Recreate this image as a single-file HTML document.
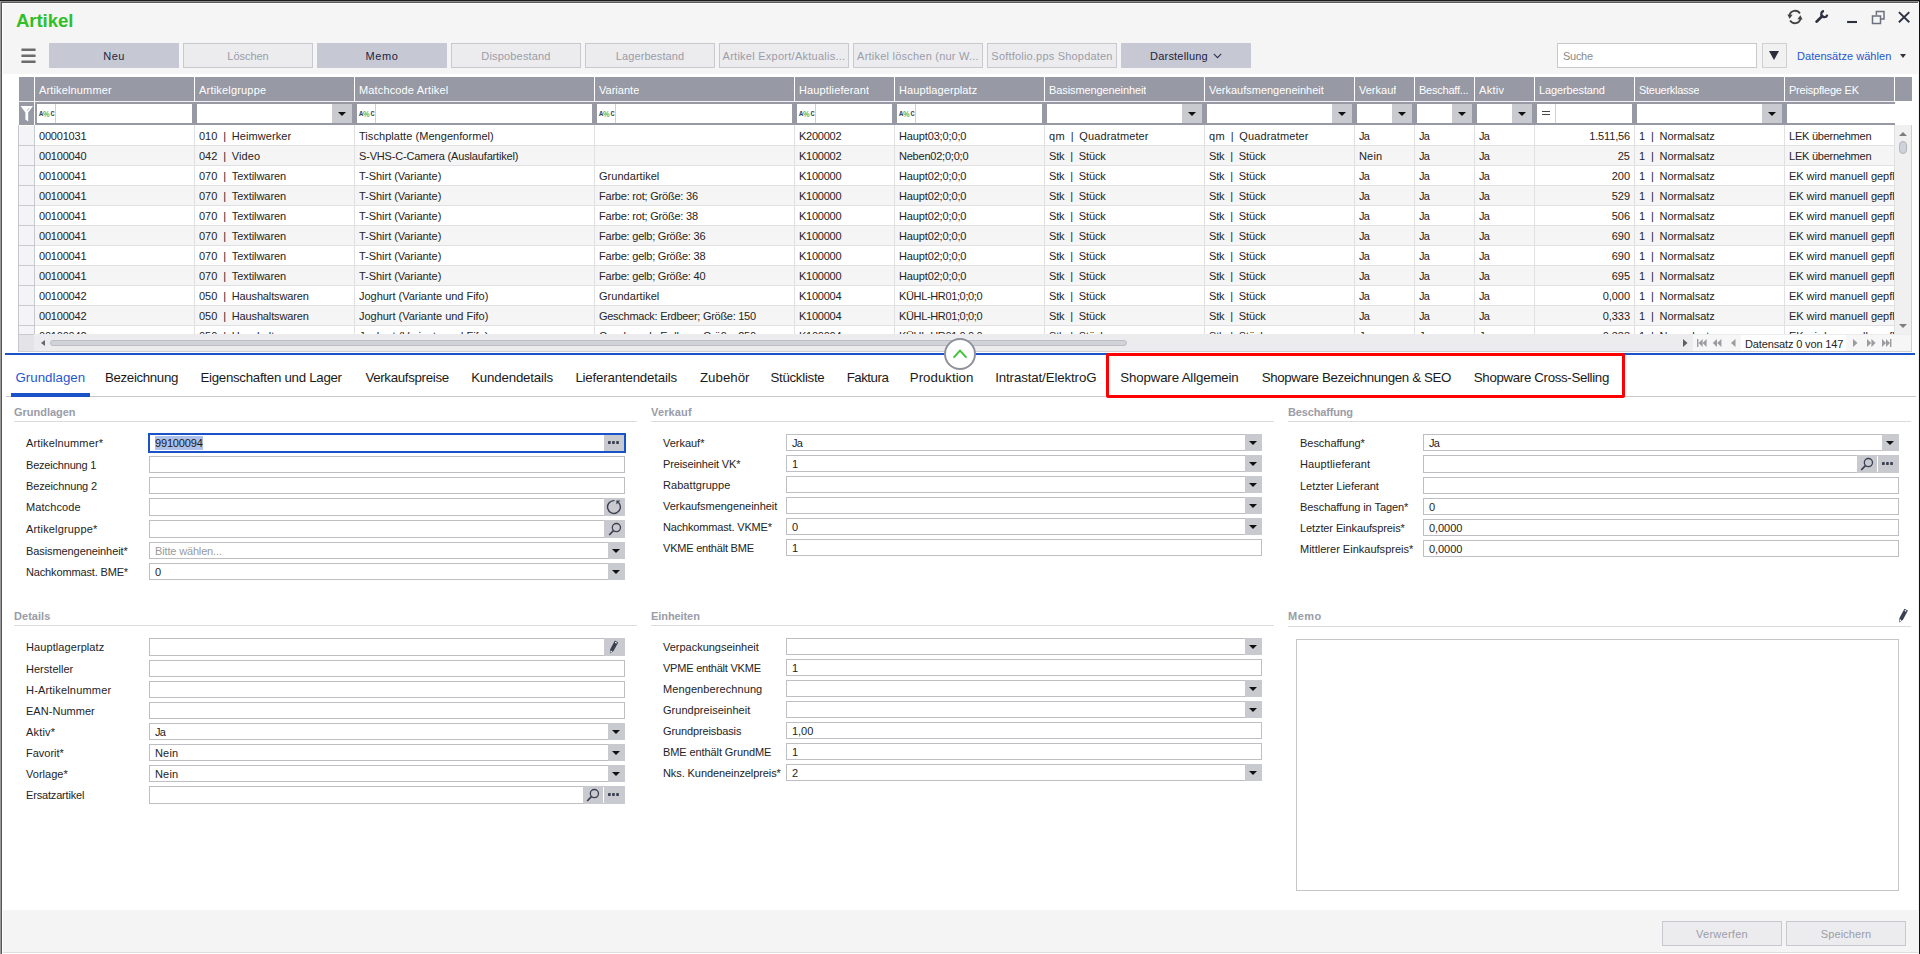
<!DOCTYPE html>
<html lang="de"><head><meta charset="utf-8"><title>Artikel</title>
<style>
*{box-sizing:border-box;margin:0;padding:0}
html,body{width:1920px;height:954px;overflow:hidden;background:#fff}
body{position:relative;font-family:"Liberation Sans",sans-serif;font-size:11px;color:#242424;line-height:1}
.a{position:absolute}
.t{position:absolute;white-space:nowrap;line-height:14px;height:14px}
#topbg{left:3px;top:4px;width:1915px;height:70px;background:#f5f5f5}
#title{left:16px;top:10px;font-size:18.6px;font-weight:bold;color:#2fc028;line-height:22px;height:22px}
.btn{position:absolute;top:43px;height:25px;width:130px;text-align:center;line-height:25px;padding-top:1px;white-space:nowrap;overflow:hidden}
.btn.on{background:#c6c9d4;color:#1c2340}
.btn.off{background:#ececef;border:1px solid #c8c9cf;color:#9a9ca8;line-height:23px}
#ghead{left:19px;top:77px;width:1893px;height:24px;background:#9799a4}
#gfilt{left:19px;top:102px;width:1876px;height:23px;background:#9799a4}
.hsep{position:absolute;top:77px;width:1px;height:24px;background:#fff}
.ht{position:absolute;top:83px;color:#fff;white-space:nowrap;line-height:14px;height:14px;overflow:hidden}
.fi{position:absolute;top:104px;height:19px;background:#fff}
.fdd{position:absolute;top:104px;height:19px;width:20px;background:#c9cacf}
.tri{position:absolute;width:0;height:0;border-left:4px solid transparent;border-right:4px solid transparent;border-top:4px solid #111}
.abc{position:absolute;top:109px;width:17px;height:11px;font-family:"Liberation Mono",monospace;font-weight:bold;color:#444;line-height:11px}
.abc b{position:absolute;top:0;font-size:7px;font-weight:bold}
.abc i{position:absolute;top:0;left:4.4px;font-size:9px;font-style:normal;font-weight:bold;color:#4fb95c;font-family:"Liberation Sans",sans-serif;transform:scaleX(.82);transform-origin:0 0}
.row{position:absolute;left:19px;width:1876px;height:20px;border-bottom:1px solid #e1e1e3}
.row.alt{background:#f5f5f5}
.ind{position:absolute;left:0;top:0;width:15px;height:20px;background:#f4f4f6;border-bottom:1px solid #c9cad0}
.c{position:absolute;top:3px;white-space:nowrap;line-height:14px;height:14px;overflow:hidden}
.c.r{text-align:right}
.c .p{display:inline-block;text-align:center;white-space:normal}
.vsep{position:absolute;top:125px;width:1px;height:209px;background:#e1e1e3}
.lab{position:absolute;white-space:nowrap;line-height:14px;height:14px}
.fld{position:absolute;background:#fff;border:1px solid #bfbfc3;height:17px}
.fld .v{position:absolute;left:5px;top:1px;line-height:14px;white-space:nowrap}
.fld .ph{color:#9a9a9a}
.bx{position:absolute;top:-1px;right:-1px;bottom:-1px;background:#c9cacf}
.sec{position:absolute;font-weight:bold;color:#9a9ca8;white-space:nowrap;line-height:14px;height:14px}
.secl{position:absolute;height:1px;background:#dcdcde}
.tab{position:absolute;top:369px;font-size:13.3px;line-height:18px;height:18px;white-space:nowrap;color:#1a1a1a}
</style></head>
<body>
<div class="a" style="left:0;top:0;width:1920px;height:1px;background:#1c1c1c"></div><div class="a" style="left:0;top:1px;width:1920px;height:1px;background:#8c8c8c"></div><div class="a" style="left:1px;top:2px;width:1917px;height:1px;background:#5a5a5a"></div><div class="a" style="left:2px;top:3px;width:1916px;height:1px;background:#fff"></div><div class="a" style="left:2px;top:3px;width:1px;height:950px;background:#fff"></div><div class="a" style="left:0;top:1px;width:1px;height:953px;background:#9a9a9a"></div><div class="a" style="left:1px;top:2px;width:1px;height:952px;background:#555"></div><div class="a" style="left:1918px;top:2px;width:1px;height:952px;background:#f4f4f4"></div><div class="a" style="left:1919px;top:0;width:1px;height:954px;background:#111"></div><div class="a" id="topbg"></div>
<div class="a" style="left:3px;top:910px;width:1915px;height:42px;background:#f4f4f4"></div><div class="a" style="left:3px;top:952px;width:1915px;height:1px;background:#dedede"></div>
<div class="a" id="title" style="letter-spacing:-0.084px;">Artikel</div>
<svg class="a" style="left:1780px;top:4px" width="138" height="28" viewBox="0 0 138 28" fill="none">
<g stroke="#444" stroke-width="1.9"><path d="M19.9 9.4A5.7 5.7 0 0 0 9.5 11.4"/><path d="M10.1 16.6A5.7 5.7 0 0 0 20.5 14.6"/></g>
<path d="M7.4 10.4l5.2 0.3-3.0 4.1z" fill="#444"/><path d="M22.6 15.6l-5.2-0.3 3.0-4.1z" fill="#444"/>
<path d="M36.5 17.7l5.8-5.7" stroke="#2d3142" stroke-width="2.6" stroke-linecap="round"/>
<path d="M47.2 10.6A3.0 3.0 0 1 1 44.0 7.2" stroke="#2d3142" stroke-width="2.2"/>
<path d="M67.1 18h9.9" stroke="#2d3142" stroke-width="2.1"/>
<path d="M92.5 11.9h8v7.6h-8z" stroke="#6e717e" stroke-width="1.5"/>
<path d="M96.4 11.2v-3.7h7.6v7.6h-3.2" stroke="#6e717e" stroke-width="1.5"/>
<path d="M118.9 8.1l10.4 10.2M129.3 8.1l-10.4 10.2" stroke="#2d3142" stroke-width="1.9"/>
</svg>
<svg class="a" style="left:20px;top:47px" width="18" height="18" viewBox="0 0 18 18" fill="#6c6c6c"><rect x="1.4" y="1.5" width="14.2" height="2.4" rx="0.5"/><rect x="1.4" y="7.5" width="14.2" height="2.4" rx="0.5"/><rect x="1.4" y="13.5" width="14.2" height="2.4" rx="0.5"/></svg>
<div class="btn on" style="left:49px;letter-spacing:0.374px;">Neu</div><div class="btn off" style="left:183px;letter-spacing:-0.041px;">Löschen</div><div class="btn on" style="left:317px;letter-spacing:0.560px;">Memo</div><div class="btn off" style="left:451px;letter-spacing:0.169px;">Dispobestand</div><div class="btn off" style="left:585px;letter-spacing:0.085px;">Lagerbestand</div><div class="btn off" style="left:719px;letter-spacing:0.256px;">Artikel Export/Aktualis...</div><div class="btn off" style="left:853px;letter-spacing:0.226px;">Artikel löschen (nur W...</div><div class="btn off" style="left:987px;letter-spacing:0.195px;">Softfolio.pps Shopdaten</div><div class="btn on" style="left:1121px"><span style="letter-spacing:0.196px;">Darstellung</span><svg width="9" height="6" viewBox="0 0 9 6" style="margin-left:5px;vertical-align:1px" fill="none" stroke="#2d3350" stroke-width="1.1"><path d="M0.8 0.9l3.7 3.7 3.7-3.7"/></svg></div>
<div class="a" style="left:1557px;top:43px;width:200px;height:25px;background:#fff;border:1px solid #c9c9cc"><span class="t" style="left:5px;top:5px;color:#8a8a8a;letter-spacing:-0.278px;">Suche</span></div><div class="a" style="left:1762px;top:43px;width:25px;height:25px;background:#f1f1f2;border:1px solid #d0d0d3"><div class="a" style="left:6px;top:7px;width:0;height:0;border-left:5px solid transparent;border-right:5px solid transparent;border-top:9px solid #2a2d3a"></div></div><div class="t" style="left:1797px;top:49px;color:#1f55cf;letter-spacing:0.044px;">Datensätze wählen</div><div class="a" style="left:1900px;top:54px;width:0;height:0;border-left:3.5px solid transparent;border-right:3.5px solid transparent;border-top:4px solid #333"></div>
<div class="a" id="ghead"></div><div class="a" style="left:19px;top:101px;width:1876px;height:1px;background:#f2f2f4"></div><div class="a" id="gfilt"></div><div class="a" style="left:1895px;top:101px;width:17px;height:24px;background:#fff"></div><div class="a" style="left:1895px;top:125px;width:17px;height:209px;background:#f0f0f1"></div><div class="hsep" style="left:34px;height:48px"></div><div class="hsep" style="left:194px"></div><div class="ht" style="left:39px;max-width:153px;letter-spacing:0.146px;">Artikelnummer</div><div class="fi" style="left:37px;width:155px"></div><div class="a" style="left:55px;top:104px;width:1px;height:19px;background:#cfcfd4"></div><div class="abc" style="left:39px"><b style="left:0">A</b><i>%</i><b style="left:11.6px">C</b></div><div class="hsep" style="left:354px"></div><div class="ht" style="left:199px;max-width:153px;letter-spacing:0.191px;">Artikelgruppe</div><div class="fi" style="left:197px;width:155px"></div><div class="fdd" style="left:332px"><div class="tri" style="left:6px;top:8px"></div></div><div class="hsep" style="left:594px"></div><div class="ht" style="left:359px;max-width:233px;letter-spacing:0.146px;">Matchcode Artikel</div><div class="fi" style="left:357px;width:235px"></div><div class="a" style="left:375px;top:104px;width:1px;height:19px;background:#cfcfd4"></div><div class="abc" style="left:359px"><b style="left:0">A</b><i>%</i><b style="left:11.6px">C</b></div><div class="hsep" style="left:794px"></div><div class="ht" style="left:599px;max-width:193px;letter-spacing:0.018px;">Variante</div><div class="fi" style="left:597px;width:195px"></div><div class="a" style="left:615px;top:104px;width:1px;height:19px;background:#cfcfd4"></div><div class="abc" style="left:599px"><b style="left:0">A</b><i>%</i><b style="left:11.6px">C</b></div><div class="hsep" style="left:894px"></div><div class="ht" style="left:799px;max-width:93px;letter-spacing:0.129px;">Hauptlieferant</div><div class="fi" style="left:797px;width:95px"></div><div class="a" style="left:815px;top:104px;width:1px;height:19px;background:#cfcfd4"></div><div class="abc" style="left:799px"><b style="left:0">A</b><i>%</i><b style="left:11.6px">C</b></div><div class="hsep" style="left:1044px"></div><div class="ht" style="left:899px;max-width:143px;letter-spacing:0.083px;">Hauptlagerplatz</div><div class="fi" style="left:897px;width:145px"></div><div class="a" style="left:915px;top:104px;width:1px;height:19px;background:#cfcfd4"></div><div class="abc" style="left:899px"><b style="left:0">A</b><i>%</i><b style="left:11.6px">C</b></div><div class="hsep" style="left:1204px"></div><div class="ht" style="left:1049px;max-width:153px;letter-spacing:-0.098px;">Basismengeneinheit</div><div class="fi" style="left:1047px;width:155px"></div><div class="fdd" style="left:1182px"><div class="tri" style="left:6px;top:8px"></div></div><div class="hsep" style="left:1354px"></div><div class="ht" style="left:1209px;max-width:143px;letter-spacing:-0.008px;">Verkaufsmengeneinheit</div><div class="fi" style="left:1207px;width:145px"></div><div class="fdd" style="left:1332px"><div class="tri" style="left:6px;top:8px"></div></div><div class="hsep" style="left:1414px"></div><div class="ht" style="left:1359px;max-width:53px;letter-spacing:-0.000px;">Verkauf</div><div class="fi" style="left:1357px;width:55px"></div><div class="fdd" style="left:1392px"><div class="tri" style="left:6px;top:8px"></div></div><div class="hsep" style="left:1474px"></div><div class="ht" style="left:1419px;max-width:53px;letter-spacing:-0.225px;">Beschaff...</div><div class="fi" style="left:1417px;width:55px"></div><div class="fdd" style="left:1452px"><div class="tri" style="left:6px;top:8px"></div></div><div class="hsep" style="left:1534px"></div><div class="ht" style="left:1479px;max-width:53px;letter-spacing:0.293px;">Aktiv</div><div class="fi" style="left:1477px;width:55px"></div><div class="fdd" style="left:1512px"><div class="tri" style="left:6px;top:8px"></div></div><div class="hsep" style="left:1634px"></div><div class="ht" style="left:1539px;max-width:93px;letter-spacing:-0.123px;">Lagerbestand</div><div class="fi" style="left:1537px;width:95px"></div><div class="a" style="left:1555px;top:104px;width:1px;height:19px;background:#cfcfd4"></div><div class="a" style="left:1542px;top:111px;width:8px;height:1px;background:#444"></div><div class="a" style="left:1542px;top:114px;width:8px;height:1px;background:#444"></div><div class="hsep" style="left:1784px"></div><div class="ht" style="left:1639px;max-width:143px;letter-spacing:-0.274px;">Steuerklasse</div><div class="fi" style="left:1637px;width:145px"></div><div class="fdd" style="left:1762px"><div class="tri" style="left:6px;top:8px"></div></div><div class="hsep" style="left:1894px"></div><div class="ht" style="left:1789px;max-width:103px;letter-spacing:-0.212px;">Preispflege EK</div><div class="fi" style="left:1787px;width:108px"></div>
<svg class="a" style="left:20px;top:105px" width="14" height="18" viewBox="0 0 14 18"><path d="M0.5 1h12.5l-4.8 6.5v9l-2.8-2v-7z" fill="#fff"/><path d="M9.2 3.2l-2.2 2.6" stroke="#9799a4" stroke-width="0.8"/></svg>
<div class="a" style="left:0;top:126px;width:1920px;height:208px;overflow:hidden"><div class="row" style="top:0px"><div class="ind"></div><div class="c" style="left:20px;width:151px"><span style="letter-spacing:-0.205px;">00001031</span></div><div class="c" style="left:180px;width:151px"><span style="letter-spacing:-0.018px;">010</span><span class="p" style="width:14.5px"> | </span><span style="letter-spacing:0.063px;">Heimwerker</span></div><div class="c" style="left:340px;width:231px"><span style="letter-spacing:0.051px;">Tischplatte (Mengenformel)</span></div><div class="c" style="left:780px;width:91px"><span style="letter-spacing:-0.249px;">K200002</span></div><div class="c" style="left:880px;width:141px"><span style="letter-spacing:-0.139px;">Haupt03;0;0;0</span></div><div class="c" style="left:1030px;width:151px"><span style="letter-spacing:0.260px;">qm</span><span class="p" style="width:14.5px"> | </span><span style="letter-spacing:0.120px;">Quadratmeter</span></div><div class="c" style="left:1190px;width:141px"><span style="letter-spacing:0.260px;">qm</span><span class="p" style="width:14.5px"> | </span><span style="letter-spacing:0.120px;">Quadratmeter</span></div><div class="c" style="left:1340px;width:51px"><span style="letter-spacing:-0.659px;">Ja</span></div><div class="c" style="left:1400px;width:51px"><span style="letter-spacing:-0.659px;">Ja</span></div><div class="c" style="left:1460px;width:51px"><span style="letter-spacing:-0.659px;">Ja</span></div><div class="c r" style="left:1520px;width:91px"><span style="letter-spacing:-0.150px;">1.511,56</span></div><div class="c" style="left:1620px;width:141px">1<span class="p" style="width:14.4px"> | </span><span style="letter-spacing:-0.032px;">Normalsatz</span></div><div class="c" style="left:1770px;width:105px"><span style="letter-spacing:-0.237px;">LEK übernehmen</span></div></div><div class="row alt" style="top:20px"><div class="ind"></div><div class="c" style="left:20px;width:151px"><span style="letter-spacing:-0.205px;">00100040</span></div><div class="c" style="left:180px;width:151px"><span style="letter-spacing:-0.018px;">042</span><span class="p" style="width:14.5px"> | </span><span style="letter-spacing:0.073px;">Video</span></div><div class="c" style="left:340px;width:231px"><span style="letter-spacing:-0.165px;">S-VHS-C-Camera (Auslaufartikel)</span></div><div class="c" style="left:780px;width:91px"><span style="letter-spacing:-0.249px;">K100002</span></div><div class="c" style="left:880px;width:141px"><span style="letter-spacing:-0.221px;">Neben02;0;0;0</span></div><div class="c" style="left:1030px;width:151px"><span style="letter-spacing:-0.198px;">Stk</span><span class="p" style="width:14.5px"> | </span><span style="letter-spacing:-0.142px;">Stück</span></div><div class="c" style="left:1190px;width:141px"><span style="letter-spacing:-0.198px;">Stk</span><span class="p" style="width:14.5px"> | </span><span style="letter-spacing:-0.142px;">Stück</span></div><div class="c" style="left:1340px;width:51px"><span style="letter-spacing:0.169px;">Nein</span></div><div class="c" style="left:1400px;width:51px"><span style="letter-spacing:-0.659px;">Ja</span></div><div class="c" style="left:1460px;width:51px"><span style="letter-spacing:-0.659px;">Ja</span></div><div class="c r" style="left:1520px;width:91px"><span style="letter-spacing:0.032px;">25</span></div><div class="c" style="left:1620px;width:141px">1<span class="p" style="width:14.4px"> | </span><span style="letter-spacing:-0.032px;">Normalsatz</span></div><div class="c" style="left:1770px;width:105px"><span style="letter-spacing:-0.237px;">LEK übernehmen</span></div></div><div class="row" style="top:40px"><div class="ind"></div><div class="c" style="left:20px;width:151px"><span style="letter-spacing:-0.205px;">00100041</span></div><div class="c" style="left:180px;width:151px"><span style="letter-spacing:-0.018px;">070</span><span class="p" style="width:14.5px"> | </span><span style="letter-spacing:-0.066px;">Textilwaren</span></div><div class="c" style="left:340px;width:231px"><span style="letter-spacing:-0.035px;">T-Shirt (Variante)</span></div><div class="c" style="left:580px;width:191px"><span style="letter-spacing:0.032px;">Grundartikel</span></div><div class="c" style="left:780px;width:91px"><span style="letter-spacing:-0.249px;">K100000</span></div><div class="c" style="left:880px;width:141px"><span style="letter-spacing:-0.139px;">Haupt02;0;0;0</span></div><div class="c" style="left:1030px;width:151px"><span style="letter-spacing:-0.198px;">Stk</span><span class="p" style="width:14.5px"> | </span><span style="letter-spacing:-0.142px;">Stück</span></div><div class="c" style="left:1190px;width:141px"><span style="letter-spacing:-0.198px;">Stk</span><span class="p" style="width:14.5px"> | </span><span style="letter-spacing:-0.142px;">Stück</span></div><div class="c" style="left:1340px;width:51px"><span style="letter-spacing:-0.659px;">Ja</span></div><div class="c" style="left:1400px;width:51px"><span style="letter-spacing:-0.659px;">Ja</span></div><div class="c" style="left:1460px;width:51px"><span style="letter-spacing:-0.659px;">Ja</span></div><div class="c r" style="left:1520px;width:91px"><span style="letter-spacing:-0.018px;">200</span></div><div class="c" style="left:1620px;width:141px">1<span class="p" style="width:14.4px"> | </span><span style="letter-spacing:-0.032px;">Normalsatz</span></div><div class="c" style="left:1770px;width:105px"><span style="letter-spacing:-0.037px;">EK wird manuell gepflegt</span></div></div><div class="row alt" style="top:60px"><div class="ind"></div><div class="c" style="left:20px;width:151px"><span style="letter-spacing:-0.205px;">00100041</span></div><div class="c" style="left:180px;width:151px"><span style="letter-spacing:-0.018px;">070</span><span class="p" style="width:14.5px"> | </span><span style="letter-spacing:-0.066px;">Textilwaren</span></div><div class="c" style="left:340px;width:231px"><span style="letter-spacing:-0.035px;">T-Shirt (Variante)</span></div><div class="c" style="left:580px;width:191px"><span style="letter-spacing:-0.215px;">Farbe: rot; Größe: 36</span></div><div class="c" style="left:780px;width:91px"><span style="letter-spacing:-0.249px;">K100000</span></div><div class="c" style="left:880px;width:141px"><span style="letter-spacing:-0.139px;">Haupt02;0;0;0</span></div><div class="c" style="left:1030px;width:151px"><span style="letter-spacing:-0.198px;">Stk</span><span class="p" style="width:14.5px"> | </span><span style="letter-spacing:-0.142px;">Stück</span></div><div class="c" style="left:1190px;width:141px"><span style="letter-spacing:-0.198px;">Stk</span><span class="p" style="width:14.5px"> | </span><span style="letter-spacing:-0.142px;">Stück</span></div><div class="c" style="left:1340px;width:51px"><span style="letter-spacing:-0.659px;">Ja</span></div><div class="c" style="left:1400px;width:51px"><span style="letter-spacing:-0.659px;">Ja</span></div><div class="c" style="left:1460px;width:51px"><span style="letter-spacing:-0.659px;">Ja</span></div><div class="c r" style="left:1520px;width:91px"><span style="letter-spacing:-0.018px;">529</span></div><div class="c" style="left:1620px;width:141px">1<span class="p" style="width:14.4px"> | </span><span style="letter-spacing:-0.032px;">Normalsatz</span></div><div class="c" style="left:1770px;width:105px"><span style="letter-spacing:-0.037px;">EK wird manuell gepflegt</span></div></div><div class="row" style="top:80px"><div class="ind"></div><div class="c" style="left:20px;width:151px"><span style="letter-spacing:-0.205px;">00100041</span></div><div class="c" style="left:180px;width:151px"><span style="letter-spacing:-0.018px;">070</span><span class="p" style="width:14.5px"> | </span><span style="letter-spacing:-0.066px;">Textilwaren</span></div><div class="c" style="left:340px;width:231px"><span style="letter-spacing:-0.035px;">T-Shirt (Variante)</span></div><div class="c" style="left:580px;width:191px"><span style="letter-spacing:-0.215px;">Farbe: rot; Größe: 38</span></div><div class="c" style="left:780px;width:91px"><span style="letter-spacing:-0.249px;">K100000</span></div><div class="c" style="left:880px;width:141px"><span style="letter-spacing:-0.139px;">Haupt02;0;0;0</span></div><div class="c" style="left:1030px;width:151px"><span style="letter-spacing:-0.198px;">Stk</span><span class="p" style="width:14.5px"> | </span><span style="letter-spacing:-0.142px;">Stück</span></div><div class="c" style="left:1190px;width:141px"><span style="letter-spacing:-0.198px;">Stk</span><span class="p" style="width:14.5px"> | </span><span style="letter-spacing:-0.142px;">Stück</span></div><div class="c" style="left:1340px;width:51px"><span style="letter-spacing:-0.659px;">Ja</span></div><div class="c" style="left:1400px;width:51px"><span style="letter-spacing:-0.659px;">Ja</span></div><div class="c" style="left:1460px;width:51px"><span style="letter-spacing:-0.659px;">Ja</span></div><div class="c r" style="left:1520px;width:91px"><span style="letter-spacing:-0.018px;">506</span></div><div class="c" style="left:1620px;width:141px">1<span class="p" style="width:14.4px"> | </span><span style="letter-spacing:-0.032px;">Normalsatz</span></div><div class="c" style="left:1770px;width:105px"><span style="letter-spacing:-0.037px;">EK wird manuell gepflegt</span></div></div><div class="row alt" style="top:100px"><div class="ind"></div><div class="c" style="left:20px;width:151px"><span style="letter-spacing:-0.205px;">00100041</span></div><div class="c" style="left:180px;width:151px"><span style="letter-spacing:-0.018px;">070</span><span class="p" style="width:14.5px"> | </span><span style="letter-spacing:-0.066px;">Textilwaren</span></div><div class="c" style="left:340px;width:231px"><span style="letter-spacing:-0.035px;">T-Shirt (Variante)</span></div><div class="c" style="left:580px;width:191px"><span style="letter-spacing:-0.226px;">Farbe: gelb; Größe: 36</span></div><div class="c" style="left:780px;width:91px"><span style="letter-spacing:-0.249px;">K100000</span></div><div class="c" style="left:880px;width:141px"><span style="letter-spacing:-0.139px;">Haupt02;0;0;0</span></div><div class="c" style="left:1030px;width:151px"><span style="letter-spacing:-0.198px;">Stk</span><span class="p" style="width:14.5px"> | </span><span style="letter-spacing:-0.142px;">Stück</span></div><div class="c" style="left:1190px;width:141px"><span style="letter-spacing:-0.198px;">Stk</span><span class="p" style="width:14.5px"> | </span><span style="letter-spacing:-0.142px;">Stück</span></div><div class="c" style="left:1340px;width:51px"><span style="letter-spacing:-0.659px;">Ja</span></div><div class="c" style="left:1400px;width:51px"><span style="letter-spacing:-0.659px;">Ja</span></div><div class="c" style="left:1460px;width:51px"><span style="letter-spacing:-0.659px;">Ja</span></div><div class="c r" style="left:1520px;width:91px"><span style="letter-spacing:-0.018px;">690</span></div><div class="c" style="left:1620px;width:141px">1<span class="p" style="width:14.4px"> | </span><span style="letter-spacing:-0.032px;">Normalsatz</span></div><div class="c" style="left:1770px;width:105px"><span style="letter-spacing:-0.037px;">EK wird manuell gepflegt</span></div></div><div class="row" style="top:120px"><div class="ind"></div><div class="c" style="left:20px;width:151px"><span style="letter-spacing:-0.205px;">00100041</span></div><div class="c" style="left:180px;width:151px"><span style="letter-spacing:-0.018px;">070</span><span class="p" style="width:14.5px"> | </span><span style="letter-spacing:-0.066px;">Textilwaren</span></div><div class="c" style="left:340px;width:231px"><span style="letter-spacing:-0.035px;">T-Shirt (Variante)</span></div><div class="c" style="left:580px;width:191px"><span style="letter-spacing:-0.226px;">Farbe: gelb; Größe: 38</span></div><div class="c" style="left:780px;width:91px"><span style="letter-spacing:-0.249px;">K100000</span></div><div class="c" style="left:880px;width:141px"><span style="letter-spacing:-0.139px;">Haupt02;0;0;0</span></div><div class="c" style="left:1030px;width:151px"><span style="letter-spacing:-0.198px;">Stk</span><span class="p" style="width:14.5px"> | </span><span style="letter-spacing:-0.142px;">Stück</span></div><div class="c" style="left:1190px;width:141px"><span style="letter-spacing:-0.198px;">Stk</span><span class="p" style="width:14.5px"> | </span><span style="letter-spacing:-0.142px;">Stück</span></div><div class="c" style="left:1340px;width:51px"><span style="letter-spacing:-0.659px;">Ja</span></div><div class="c" style="left:1400px;width:51px"><span style="letter-spacing:-0.659px;">Ja</span></div><div class="c" style="left:1460px;width:51px"><span style="letter-spacing:-0.659px;">Ja</span></div><div class="c r" style="left:1520px;width:91px"><span style="letter-spacing:-0.018px;">690</span></div><div class="c" style="left:1620px;width:141px">1<span class="p" style="width:14.4px"> | </span><span style="letter-spacing:-0.032px;">Normalsatz</span></div><div class="c" style="left:1770px;width:105px"><span style="letter-spacing:-0.037px;">EK wird manuell gepflegt</span></div></div><div class="row alt" style="top:140px"><div class="ind"></div><div class="c" style="left:20px;width:151px"><span style="letter-spacing:-0.205px;">00100041</span></div><div class="c" style="left:180px;width:151px"><span style="letter-spacing:-0.018px;">070</span><span class="p" style="width:14.5px"> | </span><span style="letter-spacing:-0.066px;">Textilwaren</span></div><div class="c" style="left:340px;width:231px"><span style="letter-spacing:-0.035px;">T-Shirt (Variante)</span></div><div class="c" style="left:580px;width:191px"><span style="letter-spacing:-0.226px;">Farbe: gelb; Größe: 40</span></div><div class="c" style="left:780px;width:91px"><span style="letter-spacing:-0.249px;">K100000</span></div><div class="c" style="left:880px;width:141px"><span style="letter-spacing:-0.139px;">Haupt02;0;0;0</span></div><div class="c" style="left:1030px;width:151px"><span style="letter-spacing:-0.198px;">Stk</span><span class="p" style="width:14.5px"> | </span><span style="letter-spacing:-0.142px;">Stück</span></div><div class="c" style="left:1190px;width:141px"><span style="letter-spacing:-0.198px;">Stk</span><span class="p" style="width:14.5px"> | </span><span style="letter-spacing:-0.142px;">Stück</span></div><div class="c" style="left:1340px;width:51px"><span style="letter-spacing:-0.659px;">Ja</span></div><div class="c" style="left:1400px;width:51px"><span style="letter-spacing:-0.659px;">Ja</span></div><div class="c" style="left:1460px;width:51px"><span style="letter-spacing:-0.659px;">Ja</span></div><div class="c r" style="left:1520px;width:91px"><span style="letter-spacing:-0.018px;">695</span></div><div class="c" style="left:1620px;width:141px">1<span class="p" style="width:14.4px"> | </span><span style="letter-spacing:-0.032px;">Normalsatz</span></div><div class="c" style="left:1770px;width:105px"><span style="letter-spacing:-0.037px;">EK wird manuell gepflegt</span></div></div><div class="row" style="top:160px"><div class="ind"></div><div class="c" style="left:20px;width:151px"><span style="letter-spacing:-0.205px;">00100042</span></div><div class="c" style="left:180px;width:151px"><span style="letter-spacing:-0.018px;">050</span><span class="p" style="width:14.5px"> | </span><span style="letter-spacing:-0.148px;">Haushaltswaren</span></div><div class="c" style="left:340px;width:231px"><span style="letter-spacing:-0.027px;">Joghurt (Variante und Fifo)</span></div><div class="c" style="left:580px;width:191px"><span style="letter-spacing:0.032px;">Grundartikel</span></div><div class="c" style="left:780px;width:91px"><span style="letter-spacing:-0.249px;">K100004</span></div><div class="c" style="left:880px;width:141px"><span style="letter-spacing:-0.357px;">KÜHL-HR01;0;0;0</span></div><div class="c" style="left:1030px;width:151px"><span style="letter-spacing:-0.198px;">Stk</span><span class="p" style="width:14.5px"> | </span><span style="letter-spacing:-0.142px;">Stück</span></div><div class="c" style="left:1190px;width:141px"><span style="letter-spacing:-0.198px;">Stk</span><span class="p" style="width:14.5px"> | </span><span style="letter-spacing:-0.142px;">Stück</span></div><div class="c" style="left:1340px;width:51px"><span style="letter-spacing:-0.659px;">Ja</span></div><div class="c" style="left:1400px;width:51px"><span style="letter-spacing:-0.659px;">Ja</span></div><div class="c" style="left:1460px;width:51px"><span style="letter-spacing:-0.659px;">Ja</span></div><div class="c r" style="left:1520px;width:91px"><span style="letter-spacing:-0.045px;">0,000</span></div><div class="c" style="left:1620px;width:141px">1<span class="p" style="width:14.4px"> | </span><span style="letter-spacing:-0.032px;">Normalsatz</span></div><div class="c" style="left:1770px;width:105px"><span style="letter-spacing:-0.037px;">EK wird manuell gepflegt</span></div></div><div class="row alt" style="top:180px"><div class="ind"></div><div class="c" style="left:20px;width:151px"><span style="letter-spacing:-0.205px;">00100042</span></div><div class="c" style="left:180px;width:151px"><span style="letter-spacing:-0.018px;">050</span><span class="p" style="width:14.5px"> | </span><span style="letter-spacing:-0.148px;">Haushaltswaren</span></div><div class="c" style="left:340px;width:231px"><span style="letter-spacing:-0.027px;">Joghurt (Variante und Fifo)</span></div><div class="c" style="left:580px;width:191px"><span style="letter-spacing:-0.276px;">Geschmack: Erdbeer; Größe: 150</span></div><div class="c" style="left:780px;width:91px"><span style="letter-spacing:-0.249px;">K100004</span></div><div class="c" style="left:880px;width:141px"><span style="letter-spacing:-0.357px;">KÜHL-HR01;0;0;0</span></div><div class="c" style="left:1030px;width:151px"><span style="letter-spacing:-0.198px;">Stk</span><span class="p" style="width:14.5px"> | </span><span style="letter-spacing:-0.142px;">Stück</span></div><div class="c" style="left:1190px;width:141px"><span style="letter-spacing:-0.198px;">Stk</span><span class="p" style="width:14.5px"> | </span><span style="letter-spacing:-0.142px;">Stück</span></div><div class="c" style="left:1340px;width:51px"><span style="letter-spacing:-0.659px;">Ja</span></div><div class="c" style="left:1400px;width:51px"><span style="letter-spacing:-0.659px;">Ja</span></div><div class="c" style="left:1460px;width:51px"><span style="letter-spacing:-0.659px;">Ja</span></div><div class="c r" style="left:1520px;width:91px"><span style="letter-spacing:-0.045px;">0,333</span></div><div class="c" style="left:1620px;width:141px">1<span class="p" style="width:14.4px"> | </span><span style="letter-spacing:-0.032px;">Normalsatz</span></div><div class="c" style="left:1770px;width:105px"><span style="letter-spacing:-0.037px;">EK wird manuell gepflegt</span></div></div><div class="row" style="top:200px"><div class="ind"></div><div class="c" style="left:20px;width:151px"><span style="letter-spacing:-0.205px;">00100042</span></div><div class="c" style="left:180px;width:151px"><span style="letter-spacing:-0.018px;">050</span><span class="p" style="width:14.5px"> | </span><span style="letter-spacing:-0.148px;">Haushaltswaren</span></div><div class="c" style="left:340px;width:231px"><span style="letter-spacing:-0.027px;">Joghurt (Variante und Fifo)</span></div><div class="c" style="left:580px;width:191px"><span style="letter-spacing:-0.276px;">Geschmack: Erdbeer; Größe: 250</span></div><div class="c" style="left:780px;width:91px"><span style="letter-spacing:-0.249px;">K100004</span></div><div class="c" style="left:880px;width:141px"><span style="letter-spacing:-0.357px;">KÜHL-HR01;0;0;0</span></div><div class="c" style="left:1030px;width:151px"><span style="letter-spacing:-0.198px;">Stk</span><span class="p" style="width:14.5px"> | </span><span style="letter-spacing:-0.142px;">Stück</span></div><div class="c" style="left:1190px;width:141px"><span style="letter-spacing:-0.198px;">Stk</span><span class="p" style="width:14.5px"> | </span><span style="letter-spacing:-0.142px;">Stück</span></div><div class="c" style="left:1340px;width:51px"><span style="letter-spacing:-0.659px;">Ja</span></div><div class="c" style="left:1400px;width:51px"><span style="letter-spacing:-0.659px;">Ja</span></div><div class="c" style="left:1460px;width:51px"><span style="letter-spacing:-0.659px;">Ja</span></div><div class="c r" style="left:1520px;width:91px"><span style="letter-spacing:-0.045px;">0,333</span></div><div class="c" style="left:1620px;width:141px">1<span class="p" style="width:14.4px"> | </span><span style="letter-spacing:-0.032px;">Normalsatz</span></div><div class="c" style="left:1770px;width:105px"><span style="letter-spacing:-0.037px;">EK wird manuell gepflegt</span></div></div></div>
<div class="vsep" style="left:34px;height:227px;background:#c9cad0"></div><div class="vsep" style="left:194px"></div><div class="vsep" style="left:354px"></div><div class="vsep" style="left:594px"></div><div class="vsep" style="left:794px"></div><div class="vsep" style="left:894px"></div><div class="vsep" style="left:1044px"></div><div class="vsep" style="left:1204px"></div><div class="vsep" style="left:1354px"></div><div class="vsep" style="left:1414px"></div><div class="vsep" style="left:1474px"></div><div class="vsep" style="left:1534px"></div><div class="vsep" style="left:1634px"></div><div class="vsep" style="left:1784px"></div><div class="vsep" style="left:1894px"></div>
<div class="a" style="left:1899px;top:132px;width:0;height:0;border-left:4px solid transparent;border-right:4px solid transparent;border-bottom:4px solid #7d7d80"></div><div class="a" style="left:1899px;top:141px;width:8px;height:13px;border-radius:4px;background:#d0d2d9;border:1px solid #b4b5bd"></div><div class="a" style="left:1899px;top:324px;width:0;height:0;border-left:4px solid transparent;border-right:4px solid transparent;border-top:4px solid #7d7d80"></div><div class="a" style="left:19px;top:334px;width:1893px;height:17px;background:#ececee"></div><div class="a" style="left:19px;top:334px;width:15px;height:17px;background:#e4e4e8;border-top:1px solid #c9cad0"></div><div class="a" style="left:19px;top:351px;width:1893px;height:1px;background:#cfcfd3"></div><div class="a" style="left:18px;top:125px;width:1px;height:227px;background:#c6c7cc"></div><div class="a" style="left:1911px;top:125px;width:1px;height:227px;background:#cdced3"></div><div class="a" style="left:41px;top:339.5px;width:0;height:0;border-top:3.3px solid transparent;border-bottom:3.3px solid transparent;border-right:4px solid #68686c"></div><div class="a" style="left:50px;top:340px;width:1077px;height:6px;border-radius:3px;background:#d2d3d8;border:1px solid #bdbec5"></div><div class="a" style="left:1693px;top:335px;width:218px;height:16px;background:#f6f6f7"></div><div class="a" style="left:1741px;top:335px;width:105px;height:16px;background:#fff"></div><div class="t" style="left:1745px;top:337px;letter-spacing:-0.137px;">Datensatz 0 von 147</div><svg class="a" style="left:1680px;top:338px" width="214" height="10" viewBox="0 0 214 10" fill="#9b9ba0">
<path d="M3 1l4.5 4-4.5 4z" fill="#606064"/>
<path d="M17 1h1.4v8h-1.4zM22.6 1v8l-4-4zM26.6 1v8l-4-4z"/>
<path d="M37 1v8l-4.2-4zM41.4 1v8l-4.2-4z"/>
<path d="M55.5 1v8l-4.5-4z"/>
<path d="M173 1l4.5 4-4.5 4z"/>
<path d="M187 1l4.2 4-4.2 4zM191.4 1l4.2 4-4.2 4z"/>
<path d="M202 1l4 4-4 4zM206 1l4 4-4 4zM210 1h1.4v8h-1.4z"/>
</svg>
<div class="a" style="left:5px;top:353px;width:1910px;height:2px;background:#1a52c8"></div><div class="a" style="left:944px;top:338px;width:32px;height:32px;border-radius:16px;background:#fff;border:2px solid #8f919b"></div><svg class="a" style="left:952px;top:348px" width="16" height="11" viewBox="0 0 16 11" fill="none" stroke="#35c22c" stroke-width="1.7"><path d="M1.6 9.6l6.4-7 6.4 7"/></svg>
<div class="a" style="left:6px;top:396px;width:1910px;height:1px;background:#c9c9cc"></div><div class="a" style="left:11px;top:393px;width:79px;height:4px;background:#1a52c8"></div><div class="tab" style="left:15.4px;color:#2458d0;letter-spacing:0.029px;">Grundlagen</div><div class="tab" style="left:105.0px;letter-spacing:-0.355px;">Bezeichnung</div><div class="tab" style="left:200.4px;letter-spacing:-0.282px;">Eigenschaften und Lager</div><div class="tab" style="left:365.4px;letter-spacing:-0.327px;">Verkaufspreise</div><div class="tab" style="left:471.2px;letter-spacing:-0.192px;">Kundendetails</div><div class="tab" style="left:575.4px;letter-spacing:-0.189px;">Lieferantendetails</div><div class="tab" style="left:700.0px;letter-spacing:-0.005px;">Zubehör</div><div class="tab" style="left:770.4px;letter-spacing:-0.281px;">Stückliste</div><div class="tab" style="left:846.7px;letter-spacing:-0.498px;">Faktura</div><div class="tab" style="left:909.8px;letter-spacing:0.002px;">Produktion</div><div class="tab" style="left:995.2px;letter-spacing:-0.127px;">Intrastat/ElektroG</div><div class="tab" style="left:1120.3px;letter-spacing:-0.164px;">Shopware Allgemein</div><div class="tab" style="left:1261.7px;letter-spacing:-0.369px;">Shopware Bezeichnungen &amp; SEO</div><div class="tab" style="left:1473.8px;letter-spacing:-0.340px;">Shopware Cross-Selling</div><div class="a" style="left:1106px;top:353px;width:519px;height:45px;border:3px solid #f00;border-radius:2px"></div>
<div class="sec" style="left:14px;top:405px;letter-spacing:-0.022px;">Grundlagen</div><div class="secl" style="left:14px;top:421px;width:623px"></div><div class="lab" style="left:26px;top:436px;letter-spacing:0.137px;">Artikelnummer*</div><div class="fld" style="left:148px;top:433px;width:478px;height:20px;border:2px solid #1a52c8"><span class="v" style="left:5px;top:1px;background:#abc0ea;color:#1a1a1a;padding:0;line-height:14px;letter-spacing:-0.168px;">99100094</span><div class="bx" style="width:20px;top:0;right:0;bottom:0"><svg class="a" style="left:50%;top:50%;margin:-1.7px 0 0 -6.3px" width="11" height="3" viewBox="0 0 11 3" fill="#3a4052"><rect x="0" y="0.1" width="2.7" height="2.8" rx="0.4"/><rect x="4.1" y="0.1" width="2.7" height="2.8" rx="0.4"/><rect x="8.2" y="0.1" width="2.7" height="2.8" rx="0.4"/></svg></div></div><div class="lab" style="left:26px;top:458px;letter-spacing:-0.198px;">Bezeichnung 1</div><div class="fld" style="left:149px;top:456px;width:476px;height:17px"></div><div class="lab" style="left:26px;top:479px;letter-spacing:-0.137px;">Bezeichnung 2</div><div class="fld" style="left:149px;top:477px;width:476px;height:17px"></div><div class="lab" style="left:26px;top:500.4px;letter-spacing:0.088px;">Matchcode</div><div class="fld" style="left:149px;top:498px;width:476px;height:18px"><div class="bx" style="width:21px"><svg class="a" style="left:50%;top:50%;margin:-9.1px 0 0 -9.5px" width="18" height="18" viewBox="0 0 18 18" fill="none" stroke="#3a4052" stroke-width="1.4" stroke-linecap="round"><path d="M9 2.6A6.4 6.4 0 1 0 13.7 4.7"/><path d="M11.4 2.4h3.9l-3.9 4.2z" fill="#3a4052" stroke="none"/></svg></div></div><div class="lab" style="left:26px;top:522.4px;letter-spacing:0.165px;">Artikelgruppe*</div><div class="fld" style="left:149px;top:520px;width:476px;height:18px"><div class="bx" style="width:21px"><svg class="a" style="left:50%;top:50%;margin:-7px 0 0 -7px" width="14" height="14" viewBox="0 0 14 14" fill="none" stroke="#3a4052" stroke-width="1.3"><circle cx="8.4" cy="5.6" r="4.1"/><path d="M5.4 8.6l-4.2 4.4" stroke-width="1.7"/></svg></div></div><div class="lab" style="left:26px;top:544px;letter-spacing:-0.087px;">Basismengeneinheit*</div><div class="fld" style="left:149px;top:542px;width:476px;height:17px"><span class="v ph" style="letter-spacing:-0.153px;">Bitte wählen...</span><div class="bx" style="width:17px"><div class="tri" style="left:4px;top:7px"></div></div></div><div class="lab" style="left:26px;top:565px;letter-spacing:-0.149px;">Nachkommast. BME*</div><div class="fld" style="left:149px;top:563px;width:476px;height:17px"><span class="v" style="">0</span><div class="bx" style="width:17px"><div class="tri" style="left:4px;top:7px"></div></div></div><div class="sec" style="left:14px;top:609px;letter-spacing:0.033px;">Details</div><div class="secl" style="left:14px;top:625px;width:623px"></div><div class="lab" style="left:26px;top:640.4px;letter-spacing:0.083px;">Hauptlagerplatz</div><div class="fld" style="left:149px;top:638px;width:476px;height:18px"><div class="bx" style="width:21px"><svg class="a" style="left:50%;top:50%;margin:-7px 0 0 -5.5px" width="11" height="14.5" viewBox="0.5 0 11 15.5"><path d="M6.44 0.65L9.96 2.55 4.96 11.85 1.3 14.4 1.44 9.95z" fill="#3a4052"/><ellipse cx="7.5" cy="2.8" rx="1.0" ry="0.7" fill="#fff" transform="rotate(28 7.5 2.8)"/><path d="M2.0 11.3l1.7 0.9-1.9 1.3z" fill="#fff"/></svg></div></div><div class="lab" style="left:26px;top:662px;letter-spacing:0.023px;">Hersteller</div><div class="fld" style="left:149px;top:660px;width:476px;height:17px"></div><div class="lab" style="left:26px;top:683px;letter-spacing:0.186px;">H-Artikelnummer</div><div class="fld" style="left:149px;top:681px;width:476px;height:17px"></div><div class="lab" style="left:26px;top:704px;letter-spacing:0.035px;">EAN-Nummer</div><div class="fld" style="left:149px;top:702px;width:476px;height:17px"></div><div class="lab" style="left:26px;top:725px;letter-spacing:0.197px;">Aktiv*</div><div class="fld" style="left:149px;top:723px;width:476px;height:17px"><span class="v" style="letter-spacing:-0.659px;">Ja</span><div class="bx" style="width:17px"><div class="tri" style="left:4px;top:7px"></div></div></div><div class="lab" style="left:26px;top:746px;letter-spacing:-0.012px;">Favorit*</div><div class="fld" style="left:149px;top:744px;width:476px;height:17px"><span class="v" style="letter-spacing:0.169px;">Nein</span><div class="bx" style="width:17px"><div class="tri" style="left:4px;top:7px"></div></div></div><div class="lab" style="left:26px;top:767px;letter-spacing:0.026px;">Vorlage*</div><div class="fld" style="left:149px;top:765px;width:476px;height:17px"><span class="v" style="letter-spacing:0.169px;">Nein</span><div class="bx" style="width:17px"><div class="tri" style="left:4px;top:7px"></div></div></div><div class="lab" style="left:26px;top:788.4px;letter-spacing:-0.171px;">Ersatzartikel</div><div class="fld" style="left:149px;top:786px;width:476px;height:18px"><div class="bx" style="width:21px"><svg class="a" style="left:50%;top:50%;margin:-1.7px 0 0 -6.3px" width="11" height="3" viewBox="0 0 11 3" fill="#3a4052"><rect x="0" y="0.1" width="2.7" height="2.8" rx="0.4"/><rect x="4.1" y="0.1" width="2.7" height="2.8" rx="0.4"/><rect x="8.2" y="0.1" width="2.7" height="2.8" rx="0.4"/></svg></div><div class="bx" style="width:20px;right:21px"><svg class="a" style="left:50%;top:50%;margin:-7px 0 0 -7px" width="14" height="14" viewBox="0 0 14 14" fill="none" stroke="#3a4052" stroke-width="1.3"><circle cx="8.4" cy="5.6" r="4.1"/><path d="M5.4 8.6l-4.2 4.4" stroke-width="1.7"/></svg></div></div>
<div class="sec" style="left:651px;top:405px;letter-spacing:0.151px;">Verkauf</div><div class="secl" style="left:651px;top:421px;width:623px"></div><div class="lab" style="left:663px;top:436px;letter-spacing:-0.023px;">Verkauf*</div><div class="fld" style="left:786px;top:434px;width:476px;height:17px"><span class="v" style="letter-spacing:-0.659px;">Ja</span><div class="bx" style="width:17px"><div class="tri" style="left:4px;top:7px"></div></div></div><div class="lab" style="left:663px;top:457px;letter-spacing:-0.130px;">Preiseinheit VK*</div><div class="fld" style="left:786px;top:455px;width:476px;height:17px"><span class="v" style="">1</span><div class="bx" style="width:17px"><div class="tri" style="left:4px;top:7px"></div></div></div><div class="lab" style="left:663px;top:478px;letter-spacing:0.062px;">Rabattgruppe</div><div class="fld" style="left:786px;top:476px;width:476px;height:17px"><div class="bx" style="width:17px"><div class="tri" style="left:4px;top:7px"></div></div></div><div class="lab" style="left:663px;top:499px;letter-spacing:-0.032px;">Verkaufsmengeneinheit</div><div class="fld" style="left:786px;top:497px;width:476px;height:17px"><div class="bx" style="width:17px"><div class="tri" style="left:4px;top:7px"></div></div></div><div class="lab" style="left:663px;top:520px;letter-spacing:-0.165px;">Nachkommast. VKME*</div><div class="fld" style="left:786px;top:518px;width:476px;height:17px"><span class="v" style="">0</span><div class="bx" style="width:17px"><div class="tri" style="left:4px;top:7px"></div></div></div><div class="lab" style="left:663px;top:541px;letter-spacing:-0.209px;">VKME enthält BME</div><div class="fld" style="left:786px;top:539px;width:476px;height:17px"><span class="v" style="">1</span></div><div class="sec" style="left:651px;top:609px;letter-spacing:-0.078px;">Einheiten</div><div class="secl" style="left:651px;top:625px;width:623px"></div><div class="lab" style="left:663px;top:640px;letter-spacing:-0.012px;">Verpackungseinheit</div><div class="fld" style="left:786px;top:638px;width:476px;height:17px"><div class="bx" style="width:17px"><div class="tri" style="left:4px;top:7px"></div></div></div><div class="lab" style="left:663px;top:661px;letter-spacing:-0.217px;">VPME enthält VKME</div><div class="fld" style="left:786px;top:659px;width:476px;height:17px"><span class="v" style="">1</span></div><div class="lab" style="left:663px;top:682px;letter-spacing:0.090px;">Mengenberechnung</div><div class="fld" style="left:786px;top:680px;width:476px;height:17px"><div class="bx" style="width:17px"><div class="tri" style="left:4px;top:7px"></div></div></div><div class="lab" style="left:663px;top:703px;letter-spacing:0.028px;">Grundpreiseinheit</div><div class="fld" style="left:786px;top:701px;width:476px;height:17px"><div class="bx" style="width:17px"><div class="tri" style="left:4px;top:7px"></div></div></div><div class="lab" style="left:663px;top:724px;letter-spacing:-0.120px;">Grundpreisbasis</div><div class="fld" style="left:786px;top:722px;width:476px;height:17px"><span class="v" style="letter-spacing:-0.027px;">1,00</span></div><div class="lab" style="left:663px;top:745px;letter-spacing:-0.092px;">BME enthält GrundME</div><div class="fld" style="left:786px;top:743px;width:476px;height:17px"><span class="v" style="">1</span></div><div class="lab" style="left:663px;top:766px;letter-spacing:-0.089px;">Nks. Kundeneinzelpreis*</div><div class="fld" style="left:786px;top:764px;width:476px;height:17px"><span class="v" style="">2</span><div class="bx" style="width:17px"><div class="tri" style="left:4px;top:7px"></div></div></div>
<div class="sec" style="left:1288px;top:405px;letter-spacing:-0.165px;">Beschaffung</div><div class="secl" style="left:1288px;top:421px;width:623px"></div><div class="lab" style="left:1300px;top:436px;letter-spacing:-0.036px;">Beschaffung*</div><div class="fld" style="left:1423px;top:434px;width:476px;height:17px"><span class="v" style="letter-spacing:-0.659px;">Ja</span><div class="bx" style="width:17px"><div class="tri" style="left:4px;top:7px"></div></div></div><div class="lab" style="left:1300px;top:457.4px;letter-spacing:0.129px;">Hauptlieferant</div><div class="fld" style="left:1423px;top:455px;width:476px;height:18px"><div class="bx" style="width:21px"><svg class="a" style="left:50%;top:50%;margin:-1.7px 0 0 -6.3px" width="11" height="3" viewBox="0 0 11 3" fill="#3a4052"><rect x="0" y="0.1" width="2.7" height="2.8" rx="0.4"/><rect x="4.1" y="0.1" width="2.7" height="2.8" rx="0.4"/><rect x="8.2" y="0.1" width="2.7" height="2.8" rx="0.4"/></svg></div><div class="bx" style="width:20px;right:21px"><svg class="a" style="left:50%;top:50%;margin:-7px 0 0 -7px" width="14" height="14" viewBox="0 0 14 14" fill="none" stroke="#3a4052" stroke-width="1.3"><circle cx="8.4" cy="5.6" r="4.1"/><path d="M5.4 8.6l-4.2 4.4" stroke-width="1.7"/></svg></div></div><div class="lab" style="left:1300px;top:479px;letter-spacing:-0.041px;">Letzter Lieferant</div><div class="fld" style="left:1423px;top:477px;width:476px;height:17px"></div><div class="lab" style="left:1300px;top:500px;letter-spacing:-0.066px;">Beschaffung in Tagen*</div><div class="fld" style="left:1423px;top:498px;width:476px;height:17px"><span class="v" style="">0</span></div><div class="lab" style="left:1300px;top:521px;letter-spacing:-0.100px;">Letzter Einkaufspreis*</div><div class="fld" style="left:1423px;top:519px;width:476px;height:17px"><span class="v" style="letter-spacing:-0.057px;">0,0000</span></div><div class="lab" style="left:1300px;top:542px;letter-spacing:0.009px;">Mittlerer Einkaufspreis*</div><div class="fld" style="left:1423px;top:540px;width:476px;height:17px"><span class="v" style="letter-spacing:-0.057px;">0,0000</span></div><div class="sec" style="left:1288px;top:609px;letter-spacing:0.505px;">Memo</div><div class="secl" style="left:1288px;top:626px;width:623px"></div><div class="a" style="left:1296px;top:639px;width:603px;height:252px;background:#fff;border:1px solid #c6c6c9"></div><svg class="a" style="left:1898px;top:608px" width="12" height="16" viewBox="0 0 12 16"><path d="M6.44 0.65L9.96 2.55 4.96 11.85 1.3 14.4 1.44 9.95z" fill="#3a4052"/><ellipse cx="7.5" cy="2.8" rx="1.0" ry="0.7" fill="#fff" transform="rotate(28 7.5 2.8)"/><path d="M2.0 11.3l1.7 0.9-1.9 1.3z" fill="#fff"/></svg>
<div class="btn off" style="left:1662px;top:921px;width:120px;letter-spacing:0.253px;">Verwerfen</div><div class="btn off" style="left:1786px;top:921px;width:120px;letter-spacing:0.085px;">Speichern</div>
</body></html>
